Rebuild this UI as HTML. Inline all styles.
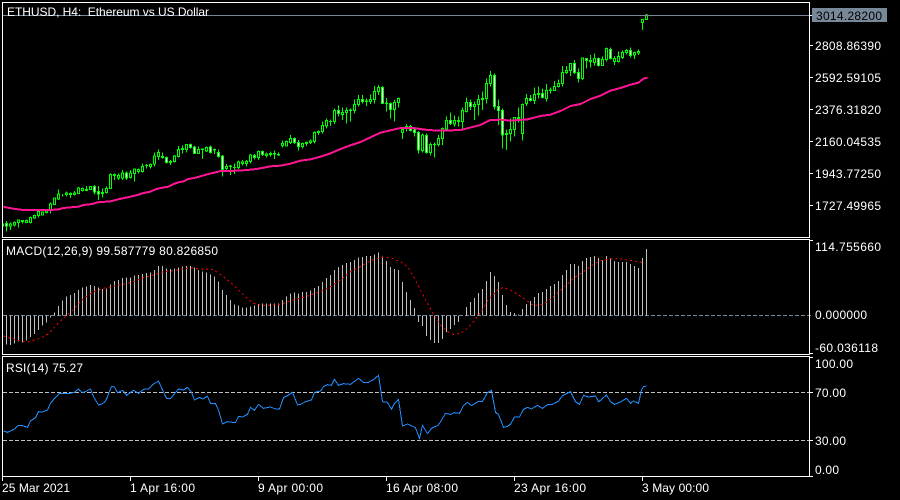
<!DOCTYPE html>
<html><head><meta charset="utf-8"><title>ETHUSD, H4</title>
<style>
html,body{margin:0;padding:0;background:#000;width:900px;height:500px;overflow:hidden}
svg{display:block}
text{font-family:"Liberation Sans",sans-serif;font-size:12px;fill:#fff;white-space:pre}
.n{vector-effect:non-scaling-stroke;stroke-width:1}
</style></head><body>
<svg xmlns="http://www.w3.org/2000/svg" width="900" height="500" viewBox="0 0 900 500" shape-rendering="crispEdges">
<rect width="900" height="500" fill="#000"/>

<!-- main chart -->
<g transform="translate(.5 0) scale(1 .33333)" fill="none">
<path class="n" stroke="#00ff00" d="M3 670V680M6 663V695M10 667V690M14 665V680M18 660V683M22 660V670M26 658V668M30 650V670M34 643V657M38 632V652M42 634V647M46 628V640M50 608V640M54 592V615M58 568V600M62 582V590M66 574V590M70 578V594M74 573V587M78 561V582M82 562V575M86 558V572M90 558V570M94 555V583M98 558V600M102 565V593M106 560V580M110 520V567M114 520V540M118 520V540M122 510V540M126 515V540M130 510V535M134 505V545M138 505V520M142 490V517M146 492V505M150 490V505M154 458V500M158 448V480M162 458V475M166 470V490M170 480V495M174 465V488M178 438V472M182 437V460M186 432V458M190 430V445M194 438V462M198 440V462M202 445V477M206 440V456M210 437V460M214 445V462M218 448V472M222 465V530M226 492V515M230 495V525M234 490V522M238 482V507M242 480V497M246 480V500M250 462V490M254 462V478M258 452V480M262 452V468M266 458V472M270 455V470M274 452V477M278 458V468M282 422V442M286 422V440M290 405V432M294 412V432M298 420V452M302 428V446M306 424V438M310 418V432M314 395V430M318 392V405M322 365V400M326 355V385M330 358V378M334 325V372M338 316V350M342 322V360M346 322V370M350 325V365M354 298V340M358 285V320M362 285V310M366 295V318M370 283V312M374 258V310M378 255V285M382 258V312M386 294V335M390 308V355M394 300V365M398 292V322M402 385V417M406 372V395M410 375V395M414 385V410M418 393V460M422 400V458M426 400V460M430 428V467M434 428V473M438 405V440M442 382V435M446 350V390M450 337V375M454 347V380M458 350V380M462 322V385M466 293V337M470 298V330M474 305V360M478 285V347M482 275V330M486 235V310M490 213V260M494 220V328M498 298V375M502 325V445M506 388V450M510 355V425M514 352V410M518 322V368M522 310V422M526 282V318M530 285V305M534 262V312M538 260V295M542 265V295M546 252V305M550 262V280M554 243V272M558 238V262M562 198V260M566 198V222M570 190V228M574 180V222M578 205V248M582 172V240M586 175V206M590 165V203M594 160V196M598 172V200M602 170V198M606 143V185M610 143V178M614 168V195M618 155V188M622 152V177M626 147V163M630 142V173M634 155V177M638 148V165M642 58V90M646 42V60"/>
<path class="n" stroke="#00ff00" fill="#000" d="M9 672h2v6h-2zM13 668h2v7h-2zM17 660h2v8h-2zM21 661h2v3h-2zM25 662h2v5h-2zM29 652h2v16h-2zM33 646h2v8h-2zM37 635h2v12h-2zM41 636h2v9h-2zM45 633h2v4h-2zM49 612h2v18h-2zM53 594h2v20h-2zM57 582h2v15h-2zM65 579h2v5h-2zM69 580h2v4h-2zM73 579h2v5h-2zM77 564h2v17h-2zM81 566h2v5h-2zM85 568h2v3h-2zM89 559h2v9h-2zM101 578h2v2h-2zM105 565h2v13h-2zM109 523h2v42h-2zM113 523h2v3h-2zM117 526h2v8h-2zM121 519h2v15h-2zM129 519h2v14h-2zM133 507h2v13h-2zM137 508h2v6h-2zM141 499h2v15h-2zM145 496h2v1h-2zM149 494h2v5h-2zM153 468h2v24h-2zM157 458h2v12h-2zM161 470h2v3h-2zM169 484h2v4h-2zM173 468h2v17h-2zM177 448h2v22h-2zM181 446h2v3h-2zM185 434h2v14h-2zM197 448h2v12h-2zM201 447h2v2h-2zM205 442h2v11h-2zM213 449h2v1h-2zM225 500h2v6h-2zM229 498h2v2h-2zM233 502h2v1h-2zM237 486h2v17h-2zM241 486h2v4h-2zM245 484h2v6h-2zM249 465h2v19h-2zM257 455h2v17h-2zM265 462h2v4h-2zM269 460h2v3h-2zM273 460h2v2h-2zM277 463h2v2h-2zM281 430h2v6h-2zM285 425h2v13h-2zM289 415h2v13h-2zM301 431h2v9h-2zM305 428h2v3h-2zM309 423h2v5h-2zM313 397h2v28h-2zM317 394h2v3h-2zM321 376h2v19h-2zM325 361h2v17h-2zM329 364h2v1h-2zM333 331h2v34h-2zM341 338h2v6h-2zM345 331h2v7h-2zM349 330h2v1h-2zM353 314h2v18h-2zM357 298h2v16h-2zM365 303h2v1h-2zM369 298h2v6h-2zM373 274h2v24h-2zM377 262h2v12h-2zM385 309h2v1h-2zM393 307h2v22h-2zM397 295h2v13h-2zM401 388h2v10h-2zM405 380h2v4h-2zM421 405h2v47h-2zM429 433h2v24h-2zM433 433h2v1h-2zM437 415h2v18h-2zM441 385h2v30h-2zM445 361h2v26h-2zM453 361h2v11h-2zM457 361h2v4h-2zM461 331h2v34h-2zM465 307h2v28h-2zM473 313h2v7h-2zM477 299h2v14h-2zM481 295h2v3h-2zM485 250h2v45h-2zM489 226h2v24h-2zM505 400h2v3h-2zM509 389h2v11h-2zM513 352h2v37h-2zM517 352h2v4h-2zM521 313h2v87h-2zM525 295h2v15h-2zM533 283h2v19h-2zM537 280h2v3h-2zM545 271h2v24h-2zM549 270h2v1h-2zM553 259h2v12h-2zM557 250h2v9h-2zM561 217h2v33h-2zM565 211h2v6h-2zM569 190h2v21h-2zM581 174h2v61h-2zM589 181h2v3h-2zM593 175h2v12h-2zM601 178h2v18h-2zM605 146h2v32h-2zM613 175h2v9h-2zM617 170h2v14h-2zM621 157h2v15h-2zM625 151h2v6h-2zM633 157h2v8h-2zM637 155h2v4h-2zM641 58h2v10h-2zM645 45h2v13h-2z"/>
<path class="n" stroke="#00ff00" fill="#fff" d="M5 670h2v8h-2zM93 559h2v17h-2zM97 574h2v8h-2zM125 519h2v15h-2zM165 472h2v15h-2zM189 433h2v9h-2zM193 441h2v19h-2zM209 441h2v17h-2zM217 458h2v12h-2zM221 468h2v40h-2zM253 466h2v7h-2zM261 455h2v9h-2zM293 416h2v12h-2zM297 427h2v13h-2zM337 332h2v8h-2zM361 298h2v6h-2zM381 262h2v48h-2zM389 310h2v18h-2zM409 379h2v12h-2zM413 390h2v8h-2zM417 397h2v53h-2zM425 406h2v51h-2zM449 361h2v10h-2zM469 307h2v13h-2zM493 226h2v94h-2zM497 320h2v12h-2zM501 332h2v73h-2zM529 295h2v6h-2zM541 280h2v12h-2zM573 190h2v28h-2zM577 218h2v17h-2zM585 175h2v7h-2zM597 175h2v21h-2zM609 148h2v27h-2zM629 151h2v15h-2z"/>
<polyline vector-effect="non-scaling-stroke" stroke="#ff1493" stroke-width="2" points="3,620 7,623 15,627 23,630 50,630 58,628 63,624 70,622 78,620 83,615 92,612 97,607 110,604 115,600 122,595 130,590 137,585 143,579 150,575 155,568 160,564 168,560 173,552 178,547 183,544 188,537 195,533 202,527 208,522 215,517 220,513 238,512 250,509 258,506 270,499 280,497 290,491 300,482 310,478 320,470 330,460 340,447 350,436 360,426 370,412 380,398 390,391 400,384 413,384 427,390 440,392 460,390 480,375 490,360 500,359 510,362 527,358 540,348 550,344 560,333 570,318 580,312 590,297 600,287 610,272 620,264 630,254 638,248 643,236 647,233"/>
</g>
<path d="M3 15.5H811" stroke="#778899" fill="none"/>

<!-- MACD -->
<path d="M3 315.5H812" stroke="#778899" stroke-dasharray="4 2" fill="none"/>
<g transform="translate(.5 235) scale(1 .33333)" fill="none">
<path class="n" stroke="#c0c0c0" d="M6 241V328M10 241V330M14 241V326M18 241V320M22 241V322M26 241V316M30 241V306M34 241V297M38 241V285M42 241V272M46 241V262M50 241V248M54 241V232M58 241V213M62 241V197M66 241V185M70 241V180M74 241V174M78 241V165M82 241V158M86 241V155M90 241V150M94 241V153M98 241V157M102 241V162M106 241V160M110 241V148M114 241V138M118 241V135M122 241V129M126 241V128M130 241V127M134 241V122M138 241V120M142 241V117M146 241V114M150 241V112M154 241V105M158 241V93M162 241V93M166 241V100M170 241V102M174 241V100M178 241V98M182 241V95M186 241V93M190 241V93M194 241V98M198 241V105M202 241V110M206 241V113M210 241V118M214 241V125M218 241V140M222 241V165M226 241V180M230 241V195M234 241V208M238 241V212M242 241V218M246 241V218M250 241V215M254 241V212M258 241V207M262 241V205M266 241V205M270 241V205M274 241V205M278 241V205M282 241V195M286 241V185M290 241V175M294 241V172M298 241V175M302 241V171M306 241V171M310 241V167M314 241V159M318 241V153M322 241V141M326 241V129M330 241V120M334 241V105M338 241V96M342 241V90M346 241V84M350 241V81M354 241V75M358 241V67M362 241V66M366 241V63M370 241V63M374 241V58M378 241V52M382 241V64M386 241V78M390 241V96M394 241V102M398 241V105M402 241V141M406 241V171M410 241V195M414 241V219M418 241V261M422 241V273M426 241V303M430 241V315M434 241V324M438 241V324M442 241V312M446 241V291M450 241V282M454 241V270M458 241V261M466 241V216M470 241V201M474 241V189M478 241V174M482 241V162M486 241V138M490 241V111M494 241V123M498 241V141M502 241V180M506 241V210M510 241V231M514 241V234M518 241V238M522 241V222M526 241V207M530 241V198M534 241V186M538 241V174M542 241V171M546 241V162M550 241V153M554 241V147M558 241V138M562 241V120M566 241V105M570 241V87M574 241V87M578 241V93M582 241V78M586 241V69M590 241V66M594 241V63M598 241V69M602 241V75M606 241V63M610 241V69M614 241V78M618 241V81M622 241V81M626 241V81M630 241V87M634 241V93M638 241V99M642 241V69M646 241V42"/>
<polyline class="n" stroke="#ff0000" stroke-dasharray="2 3" points="3,303 10,310 20,318 27,321 33,316 40,310 47,298 53,280 60,258 70,232 77,210 83,190 93,170 103,160 113,153 123,148 133,140 143,128 153,120 163,110 173,107 183,101 193,99 203,102 213,104 223,125 233,150 243,180 253,205 263,212 280,208 290,197 300,190 310,180 320,170 330,155 340,135 350,110 360,95 370,77 380,68 390,68 400,80 407,95 413,125 420,165 427,205 433,240 440,270 447,290 453,298 460,295 467,280 473,260 480,232 487,198 497,165 503,157 513,170 523,190 533,212 543,208 553,185 563,158 573,130 583,110 593,88 600,77 607,73 617,71 630,76 637,80 643,83"/>
</g>

<!-- RSI -->
<path d="M3 392.5H812M3 440.5H812" stroke="#c0c0c0" stroke-dasharray="4 2" fill="none"/>
<g transform="translate(.5 355) scale(1 .33333)" fill="none">
<polyline class="n" stroke="#1e90ff" points="3,228 7,232 13,224 18,211 22,212 27,217 30,198 35,188 38,170 42,171 47,165 50,145 55,127 59,115 68,116 74,112 78,102 82,113 86,108 90,102 93,125 98,150 102,146 105,138 107,125 111,94 114,96 117,113 122,106 126,121 133,106 138,115 143,103 148,102 153,87 158,78 161,98 166,130 170,131 178,102 183,105 187,97 191,112 194,135 199,127 202,132 207,124 210,145 215,146 218,165 222,207 227,200 235,203 238,184 242,186 247,178 250,157 254,166 258,148 263,160 270,156 275,162 279,162 283,128 287,122 292,112 297,150 300,148 305,140 311,135 314,112 320,108 323,95 327,89 331,91 334,73 338,91 343,86 350,88 358,70 363,82 368,82 374,72 378,61 380,100 382,140 387,142 391,163 394,145 398,133 402,213 407,207 415,218 419,250 422,211 427,236 431,220 438,210 445,175 450,178 454,173 459,175 463,152 467,142 471,152 478,139 482,139 487,113 491,106 495,172 498,178 503,217 507,214 510,208 514,186 519,186 523,163 527,157 531,162 537,151 542,160 547,149 552,148 558,138 562,122 570,110 575,140 579,148 583,121 588,126 595,123 598,140 600,136 606,120 610,140 614,148 620,141 626,130 630,145 633,138 638,145 641,105 643,95 646,93"/>
</g>

<!-- frames and ticks -->
<g fill="none" stroke="#fff">
<rect x="2.5" y="2.5" width="807" height="235"/>
<rect x="2.5" y="239.5" width="807" height="115"/>
<rect x="2.5" y="356.5" width="807" height="120"/>
<path d="M810 45.5h3M810 77.5h3M810 109.5h3M810 141.5h3M810 173.5h3M810 205.5h3M810 240.5h3M810 353.5h3M810 357.5h3M810 392.5h3M810 440.5h3M810 476.5h3"/>
<path d="M2.5 477v4M130.5 477v4M258.5 477v4M386.5 477v4M514.5 477v4M642.5 477v4"/>
</g>
<rect x="812" y="8" width="75" height="14" fill="#778899"/>
<path d="M810 15.5h2" stroke="#fff"/>

<!-- text -->
<text x="7" y="16" textLength="202" lengthAdjust="spacing">ETHUSD, H4:  Ethereum vs US Dollar</text>
<text x="6" y="255" textLength="212" lengthAdjust="spacing">MACD(12,26,9) 99.587779 80.826850</text>
<text x="6" y="372" textLength="77" lengthAdjust="spacing">RSI(14) 75.27</text>

<text x="816" y="20" textLength="66" lengthAdjust="spacing" style="fill:#000">3014.28200</text>
<text x="815" y="50" textLength="66" lengthAdjust="spacing">2808.86390</text>
<text x="815" y="82" textLength="66" lengthAdjust="spacing">2592.59105</text>
<text x="815" y="114" textLength="66" lengthAdjust="spacing">2376.31820</text>
<text x="815" y="146" textLength="66" lengthAdjust="spacing">2160.04535</text>
<text x="815" y="178" textLength="66" lengthAdjust="spacing">1943.77250</text>
<text x="815" y="210" textLength="66" lengthAdjust="spacing">1727.49965</text>
<text x="815" y="251" textLength="66" lengthAdjust="spacing">114.755660</text>
<text x="815" y="319" textLength="52" lengthAdjust="spacing">0.000000</text>
<text x="815" y="352" textLength="63" lengthAdjust="spacing">-60.036118</text>
<text x="815" y="368" textLength="38" lengthAdjust="spacing">100.00</text>
<text x="815" y="397" textLength="31" lengthAdjust="spacing">70.00</text>
<text x="815" y="445" textLength="31" lengthAdjust="spacing">30.00</text>
<text x="815" y="474" textLength="24" lengthAdjust="spacing">0.00</text>

<text x="2" y="492" textLength="68" lengthAdjust="spacing">25 Mar 2021</text>
<text x="130" y="492" textLength="65" lengthAdjust="spacing">1 Apr 16:00</text>
<text x="258" y="492" textLength="65" lengthAdjust="spacing">9 Apr 00:00</text>
<text x="386" y="492" textLength="72" lengthAdjust="spacing">16 Apr 08:00</text>
<text x="514" y="492" textLength="72" lengthAdjust="spacing">23 Apr 16:00</text>
<text x="642" y="492" textLength="67" lengthAdjust="spacing">3 May 00:00</text>
</svg>
</body></html>
